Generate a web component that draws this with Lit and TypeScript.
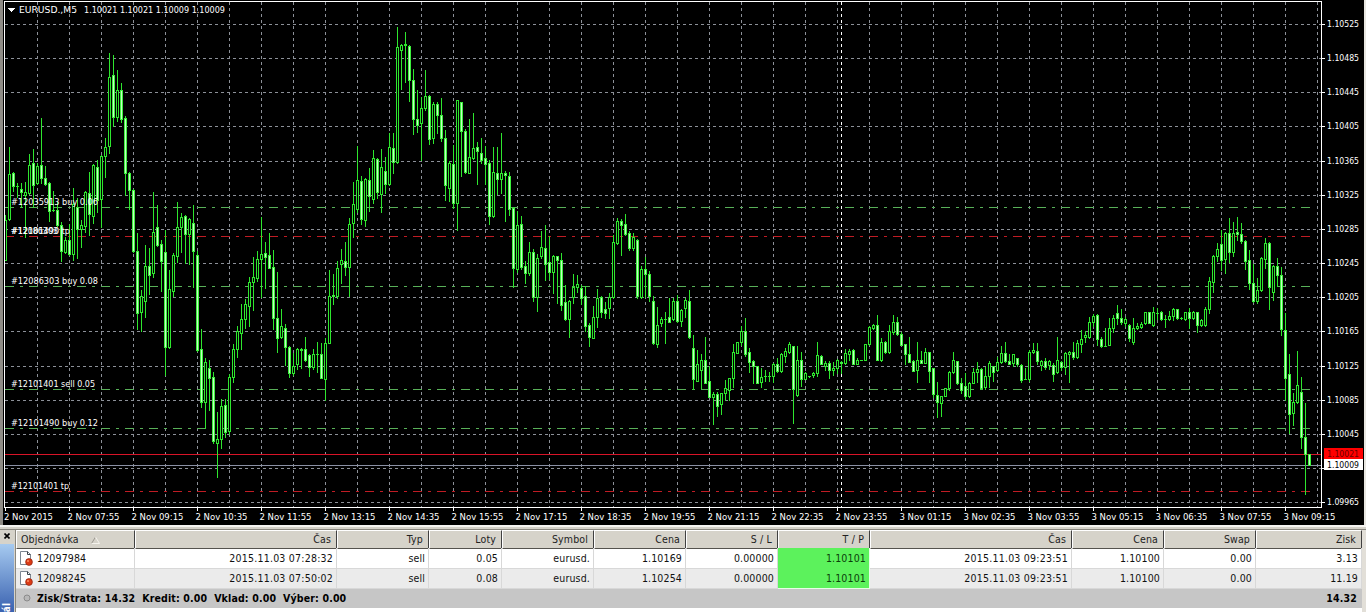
import { LitElement, html, svg, css, nothing } from "lit";
import { customElement, property } from "lit/decorators.js";
import { classMap } from "lit/directives/class-map.js";

// high, body top, body bottom, low (chart pixels), 1 = bear candle
type Candle = [number, number, number, number, number];

const CANDLES: Candle[] = [
  [215,220,260,260,0],[147,174,219,220,0],[172,173,186,191,1],[183,186,186,197,0],[183,189,192,207,1],
  [182,192,195,237,0],[154,165,193,194,0],[149,163,185,207,1],[163,166,183,184,0],[118,165,178,183,1],
  [166,178,184,185,1],[182,183,211,221,1],[191,210,210,211,0],[202,210,225,226,1],[222,225,251,261,1],
  [237,240,252,253,0],[224,240,254,255,1],[188,204,254,260,0],[198,207,229,258,1],[220,225,229,247,0],
  [191,192,226,232,0],[172,193,214,235,1],[164,165,216,223,0],[160,167,200,212,1],[155,156,199,227,0],
  [138,147,156,177,0],[53,77,146,153,0],[55,75,117,126,1],[70,90,117,121,0],[83,90,119,122,1],
  [116,118,173,195,1],[172,173,190,209,1],[189,190,251,252,1],[233,251,313,329,1],[290,296,312,331,0],
  [245,266,301,317,0],[248,266,275,294,1],[192,232,273,277,0],[205,227,245,246,1],[240,244,261,291,1],
  [230,252,347,375,1],[270,289,347,348,0],[253,255,291,296,0],[202,227,256,262,0],[213,217,227,252,0],
  [215,216,234,263,1],[218,219,234,264,0],[205,223,251,287,1],[251,255,350,351,1],[329,349,402,407,1],
  [358,362,402,428,0],[360,368,378,410,1],[372,377,441,443,1],[412,439,443,477,0],[399,406,439,448,0],
  [399,405,432,437,1],[374,377,431,434,0],[344,349,377,382,0],[326,331,349,357,0],[304,319,333,349,0],
  [299,304,319,328,0],[277,282,306,326,0],[257,277,282,310,0],[251,259,278,281,0],[217,254,259,297,0],
  [242,253,257,288,1],[233,255,268,268,1],[250,267,318,329,1],[272,318,338,352,1],[309,326,337,338,0],
  [324,328,347,365,1],[346,347,373,377,1],[353,366,373,375,0],[348,349,364,369,0],[348,349,350,368,0],
  [337,349,360,361,1],[354,355,367,376,1],[349,354,367,369,0],[342,354,354,372,0],[343,354,378,378,1],
  [338,343,379,400,0],[270,296,343,343,0],[274,295,296,304,1],[261,268,296,298,0],[249,260,264,283,0],
  [242,261,267,275,1],[218,224,267,296,0],[182,204,223,237,0],[146,180,209,212,0],[176,181,219,224,1],
  [178,179,220,226,0],[168,180,196,211,1],[150,158,199,203,0],[158,159,192,198,1],[149,167,194,212,0],
  [157,171,184,193,1],[133,147,184,185,0],[133,148,162,173,1],[27,47,162,163,0],[44,45,50,89,0],
  [32,44,45,82,0],[45,46,80,101,1],[69,80,119,134,1],[90,119,125,132,1],[97,108,123,160,0],
  [70,96,108,110,0],[95,96,139,144,1],[102,104,138,143,0],[102,104,115,133,1],[98,115,138,141,1],
  [130,138,185,200,1],[161,163,188,201,0],[145,164,203,208,1],[100,100,203,230,0],[102,102,131,176,1],
  [129,131,172,173,1],[119,157,173,173,0],[113,148,158,159,0],[142,147,151,184,1],[138,153,160,163,1],
  [146,158,164,184,1],[160,163,216,224,1],[147,172,216,217,0],[147,173,179,194,1],[133,173,179,193,0],
  [171,173,175,221,1],[172,176,209,215,1],[207,208,268,287,1],[211,225,269,272,0],[216,224,267,269,1],
  [261,266,273,283,1],[242,252,273,275,0],[249,252,297,301,1],[254,258,297,311,0],[231,247,256,258,0],
  [225,248,264,280,1],[236,262,272,279,1],[255,256,272,293,0],[256,256,260,303,1],[253,260,305,310,1],
  [285,302,319,320,1],[300,301,319,337,0],[274,287,297,303,0],[275,284,287,292,0],[285,288,298,304,1],
  [286,296,326,331,1],[323,325,337,346,1],[306,317,338,338,0],[289,298,317,327,0],[296,297,312,317,1],
  [302,309,313,318,1],[293,297,308,318,0],[235,242,297,298,0],[218,221,243,244,0],[219,221,225,255,1],
  [214,224,234,235,1],[231,233,248,250,1],[233,237,248,250,0],[239,240,296,298,1],[266,269,297,298,0],
  [257,269,274,297,1],[271,274,296,301,1],[296,301,343,344,1],[307,325,344,347,0],[317,319,323,326,0],
  [312,319,319,343,0],[298,317,322,322,1],[298,301,319,320,0],[295,301,321,322,1],[309,310,321,326,0],
  [298,300,308,317,0],[290,301,337,338,1],[335,348,379,389,1],[350,364,381,381,0],[354,360,370,388,0],
  [337,360,383,383,1],[366,381,397,397,1],[392,394,397,424,0],[392,394,406,416,1],[393,393,404,414,0],
  [380,388,393,400,0],[378,378,390,400,0],[344,352,378,387,0],[342,342,353,353,0],[326,331,342,345,0],
  [318,331,354,356,1],[348,352,362,372,1],[360,361,366,383,1],[366,366,383,383,1],[368,377,382,387,0],
  [370,376,376,381,0],[372,376,376,381,0],[363,364,376,382,0],[358,364,371,372,1],[353,354,371,372,0],
  [348,351,356,362,0],[342,344,352,353,0],[346,346,389,423,1],[346,360,395,396,0],[352,360,379,386,1],
  [372,373,379,379,0],[376,376,376,377,0],[372,373,375,377,0],[342,355,373,376,0],[355,356,364,364,1],
  [361,363,366,370,0],[361,363,370,378,1],[362,368,370,375,0],[359,360,368,373,0],[361,362,363,373,1],
  [349,353,363,364,0],[349,351,354,360,0],[349,350,364,364,1],[358,360,364,364,0],[360,360,360,360,0],
  [344,344,360,360,0],[326,327,344,345,0],[324,325,328,329,0],[315,325,360,360,1],[338,342,360,361,0],
  [341,342,352,353,1],[325,331,352,353,0],[315,322,332,334,0],[317,322,334,335,1],[332,334,345,345,1],
  [344,344,354,364,1],[337,354,362,362,1],[360,361,371,371,1],[342,360,370,382,0],[351,360,363,363,1],
  [348,352,363,363,0],[352,352,371,382,1],[368,368,394,397,1],[382,395,402,417,1],[396,396,403,416,0],
  [388,388,396,396,0],[371,372,388,390,0],[352,360,372,373,0],[361,361,383,384,1],[378,383,390,393,1],
  [373,386,396,399,1],[382,383,396,397,0],[368,372,383,383,0],[362,369,372,382,0],[368,369,388,389,1],
  [367,376,387,389,0],[361,363,376,387,0],[366,366,372,381,1],[357,362,370,371,0],[346,353,362,363,0],
  [342,353,361,362,1],[354,361,364,364,1],[354,354,363,366,0],[358,358,364,366,1],[364,365,380,382,1],
  [368,379,379,379,0],[350,352,379,381,0],[343,350,352,353,0],[343,351,361,364,1],[360,361,365,370,0],
  [358,361,367,369,1],[360,361,365,369,0],[363,365,374,381,1],[337,360,372,373,0],[361,362,367,370,1],
  [352,353,367,374,0],[351,352,354,382,0],[342,352,357,359,1],[340,343,357,358,0],[330,339,344,352,0],
  [331,335,337,342,0],[317,322,337,338,0],[314,316,322,326,0],[314,315,339,345,1],[337,339,346,347,1],
  [328,346,346,346,0],[318,328,345,345,0],[315,318,328,332,0],[305,313,318,324,1],[309,318,322,324,1],
  [317,319,323,326,0],[324,325,338,341,1],[318,328,342,344,0],[323,326,328,329,0],[322,324,327,328,0],
  [312,312,323,324,0],[312,312,323,323,1],[307,312,325,326,0],[308,313,313,319,0],[311,312,319,320,1],
  [315,319,319,327,0],[311,316,319,320,0],[308,309,316,320,0],[309,309,318,319,1],[317,318,318,319,0],
  [312,312,319,320,0],[308,312,318,328,1],[311,312,318,319,0],[312,312,325,332,1],[319,320,325,326,0],
  [307,309,325,326,0],[277,281,309,313,0],[255,256,282,292,0],[243,249,256,261,0],[230,244,260,270,1],
  [232,233,259,273,0],[218,233,252,262,1],[222,233,252,256,0],[217,232,234,240,1],[223,234,241,243,1],
  [240,241,261,269,1],[250,260,283,289,1],[264,283,301,302,1],[278,290,301,303,0],[257,258,290,291,0],
  [238,243,259,268,0],[242,243,287,309,1],[265,266,292,300,0],[258,266,275,286,1],[267,275,329,335,1],
  [313,330,378,400,1],[354,374,414,433,1],[393,402,413,425,0],[351,385,402,403,0],[377,392,437,448,1],
  [403,437,454,494,1],[454,454,465,465,1],
];

const SCALE: [string, number][] = [
  ["1.10525", 24], ["1.10485", 58], ["1.10445", 92], ["1.10405", 126], ["1.10365", 161],
  ["1.10325", 195], ["1.10285", 229], ["1.10245", 263], ["1.10205", 297], ["1.10165", 331],
  ["1.10125", 366], ["1.10085", 400], ["1.10045", 434], ["", 468], ["1.09965", 502],
];

const TIMES = [
  "2 Nov 2015", "2 Nov 07:55", "2 Nov 09:15", "2 Nov 10:35", "2 Nov 11:55", "2 Nov 13:15", "2 Nov 14:35",
  "2 Nov 15:55", "2 Nov 17:15", "2 Nov 18:35", "2 Nov 19:55", "2 Nov 21:15", "2 Nov 22:35", "2 Nov 23:55",
  "3 Nov 01:15", "3 Nov 02:35", "3 Nov 03:55", "3 Nov 05:15", "3 Nov 06:35", "3 Nov 07:55", "3 Nov 09:15",
];

interface Level {
  y: number;
  kind: "open" | "stop";
  labels: [string, number][];
}

const LEVELS: Level[] = [
  { y: 207, kind: "open", labels: [["#12035913 buy 0.06", 87]] },
  { y: 236, kind: "stop", labels: [["#12101490 tp", 59], ["#12086303", 47]] },
  { y: 286, kind: "open", labels: [["#12086303 buy 0.08", 87]] },
  { y: 389, kind: "open", labels: [["#12101401 sell 0.05", 84]] },
  { y: 428, kind: "open", labels: [["#12101490 buy 0.12", 87]] },
  { y: 491, kind: "stop", labels: [["#12101401 tp", 58]] },
];

@customElement("price-chart")
export class PriceChart extends LitElement {
  static override styles = css`
    :host {
      display: block;
      height: 525px;
    }
    svg {
      display: block;
      shape-rendering: crispEdges;
    }
    text {
      font-family: "DejaVu Sans Condensed", "DejaVu Sans", sans-serif;
      font-stretch: condensed;
      font-size: 9.5px;
      fill: #fff;
    }
    .grid {
      stroke: #8c9098;
      stroke-dasharray: 3 3;
      fill: none;
    }
    .day {
      stroke: #fff;
      stroke-dasharray: 3 3;
    }
    .axis {
      stroke: #fff;
      fill: none;
    }
    .open {
      stroke: #58b058;
      stroke-dasharray: 9 6 3 6;
    }
    .stop {
      stroke: #c01c24;
      stroke-dasharray: 9 6 3 6;
    }
    .ask {
      stroke: #d81428;
    }
    .bid {
      stroke: #8a90a4;
    }
    .wick {
      stroke: #2ee62e;
      fill: none;
    }
    .bull {
      stroke: #2ee62e;
      fill: #000;
    }
    .bear {
      stroke: #3cf03c;
      fill: #c4ffc4;
    }
    .tag-ask {
      fill: #f00;
    }
    .tag-bid {
      fill: #fff;
    }
    .dark {
      fill: #000;
    }
    .maroon {
      fill: #6a0000;
    }
  `;

  private label(text: string, x: number, y: number, width: number, cls = "") {
    return svg`<text class=${cls} x=${x} y=${y} textLength=${width} lengthAdjust="spacingAndGlyphs">${text}</text>`;
  }

  private candle([high, top, bottom, low, bear]: Candle, index: number) {
    const x = 5 + index * 4;
    const body =
      bottom - top < 1
        ? svg`<path class="wick" d="M${x - 1} ${top + 0.5}h3" />`
        : svg`<rect class=${bear ? "bear" : "bull"} x=${x - 0.5} y=${top + 0.5} width="2" height=${bottom - top} />`;
    return svg`<path class="wick" d="M${x + 0.5} ${high}V${low + 1}" />${body}`;
  }

  override render() {
    const columns = Array.from({ length: 41 }, (_, i) => 37 + i * 32);
    return html`
      <svg width="1366" height="525" viewBox="0 0 1366 525">
        <rect width="1366" height="525" fill="#000" />
        <rect width="3" height="525" fill="#8f8c86" />
        <rect x="1364" width="2" height="525" fill="#e8e6e0" />
        ${columns.map((x) => svg`<path class="grid" d="M${x + 0.5} 2V507" />`)}
        ${SCALE.map(([, y]) => svg`<path class="grid" d="M5 ${y + 0.5}H1321" />`)}
        <path class="day" d="M841.5 2V507" />
        ${LEVELS.map((l) => svg`<path class=${l.kind} d="M5 ${l.y + 0.5}H1311" />`)}
        <path class="bid" d="M5 465.5H1321" />
        <path class="ask" d="M5 454.5H1321" />
        ${CANDLES.map((c, i) => this.candle(c, i))}
        ${LEVELS.map((l) => l.labels.map(([text, w]) => this.label(text, 11, l.y - 2, w)))}
        <path class="axis" d="M4.5 507.5V1.5H1321.5V507.5Z" />
        ${SCALE.map(([text, y]) => svg`
          <path class="axis" d="M1322 ${y + 0.5}h3" />
          ${text ? this.label(text, 1327, y + 3, 32) : nothing}
        `)}
        ${TIMES.map((text, i) => svg`
          <path class="axis" d="M${5.5 + i * 64} 508v3" />
          ${this.label(text, i ? 3.5 + i * 64 : 4, 520, i ? 52 : 49)}
        `)}
        <rect class="tag-ask" x="1324" y="448" width="39" height="11" />
        ${this.label("1.10021", 1327, 457, 32, "maroon")}
        <rect class="tag-bid" x="1324" y="459" width="39" height="11" />
        ${this.label("1.10009", 1327, 468, 32, "dark")}
        <path d="M8 8h7l-3.5 4z" fill="#fff" />
        ${this.label("EURUSD.,M5", 19, 13, 58)}
        ${this.label("1.10021 1.10021 1.10009 1.10009", 84, 13, 141)}
      </svg>
    `;
  }
}

const HEADERS = ["Objednávka", "Čas", "Typ", "Loty", "Symbol", "Cena", "S / L", "T / P", "Čas", "Cena", "Swap", "Zisk"];

const ORDERS = [
  ["12097984", "2015.11.03 07:28:32", "sell", "0.05", "eurusd.", "1.10169", "0.00000", "1.10101", "2015.11.03 09:23:51", "1.10100", "0.00", "3.13"],
  ["12098245", "2015.11.03 07:50:02", "sell", "0.08", "eurusd.", "1.10254", "0.00000", "1.10101", "2015.11.03 09:23:51", "1.10100", "0.00", "11.19"],
];

@customElement("order-history")
export class OrderHistory extends LitElement {
  @property({ attribute: false }) orders: string[][] = [];

  static override styles = css`
    :host {
      display: block;
      font-family: "DejaVu Sans Condensed", "DejaVu Sans", sans-serif;
      font-stretch: condensed;
      font-size: 10.5px;
      letter-spacing: 0.15px;
      color: #111;
    }
    .row {
      display: grid;
      grid-template-columns: 119px 202px 92px 73px 92px 92px 92px 92px 202px 92px 92px 106px;
      height: 20px;
      box-sizing: border-box;
    }
    .head {
      height: 18px;
      background: #d6d3ca;
    }
    .head .cell {
      border-right: 1px solid #404040;
      border-bottom: 1px solid #55534e;
      border-top: 1px solid #fff;
      border-left: 1px solid #fff;
      line-height: 17px;
      padding-right: 5px;
      padding-top: 0;
      color: #222;
    }
    .cell {
      box-sizing: border-box;
      min-width: 0;
      white-space: nowrap;
      text-align: right;
      padding: 1px 3px 0 0;
      line-height: 19px;
      border-right: 1px solid #d8d8d8;
      border-bottom: 1px solid #d8d8d8;
    }
    .cell.first {
      display: flex;
      align-items: center;
      gap: 4px;
      padding-left: 3px;
    }
    .head .cell.first {
      padding-left: 4px;
      gap: 12px;
    }
    .date {
      letter-spacing: 0.22px;
    }
    .body {
      background: #fff;
    }
    .body.odd {
      background: #ebebeb;
    }
    .hit {
      background: #5cf25c;
      color: #0b3d0b;
      border-color: #e6ffe6;
    }
    .total {
      display: flex;
      align-items: center;
      height: 20px;
      background: #c6c6c6;
      font-weight: bold;
      padding: 0 5px 0 7px;
      box-sizing: border-box;
      gap: 6px;
      color: #000;
    }
    .sum {
      flex: 1;
      white-space: pre;
    }
  `;

  override render() {
    return html`
      <div class="row head">
        ${HEADERS.map((h, i) => html`
          <div class=${classMap({ cell: true, first: i === 0 })}>
            <span>${h}</span>
            ${i === 0
              ? html`<svg width="9" height="8"><path d="M0.5 7.5L4.5 1" stroke="#9a978f" fill="none" /><path d="M4.5 1L8.5 7.5H0.5" stroke="#f4f2ec" fill="none" /></svg>`
              : nothing}
          </div>
        `)}
      </div>
      ${this.orders.map((order, r) => html`
        <div class=${classMap({ row: true, body: true, odd: r % 2 === 1 })}>
          ${order.map((value, i) => html`
            <div class=${classMap({ cell: true, first: i === 0, hit: i === 7, date: i === 1 || i === 8 })}>
              ${i === 0
                ? html`<svg width="14" height="15" viewBox="0 0 14 15">
                    <path d="M1.5 0.5h7l3 3v10h-10z" fill="#fff" stroke="#7c8590" />
                    <path d="M8.5 0.5v3h3" fill="none" stroke="#3c444c" />
                    <circle cx="10" cy="11" r="3.4" fill="#dc3a14" stroke="#8c2410" stroke-width="0.7" />
                    <circle cx="9" cy="10" r="1" fill="#ff9468" />
                  </svg>`
                : nothing}
              <span>${value}</span>
            </div>
          `)}
        </div>
      `)}
      <div class="total">
        <svg width="8" height="8"><circle cx="4" cy="4" r="3" fill="#b8b8b8" stroke="#8a8a8a" /></svg>
        <span class="sum">Zisk/Strata: 14.32  Kredit: 0.00  Vklad: 0.00  Výber: 0.00</span>
        <span>14.32</span>
      </div>
    `;
  }
}

@customElement("app-root")
export class AppRoot extends LitElement {
  static override styles = css`
    :host {
      display: flex;
      flex-direction: column;
      width: 1366px;
      height: 612px;
      overflow: hidden;
      background: #fff;
    }
    .splitter {
      flex: none;
      height: 5px;
      box-sizing: border-box;
      background: #d6d3ca;
      border-top: 2px solid #f6f5f2;
      border-bottom: 1px solid #8a877f;
    }
    .terminal {
      display: flex;
      flex: 1;
      min-height: 0;
    }
    .side {
      width: 16px;
      box-sizing: border-box;
      display: flex;
      flex-direction: column;
      background: #d6d3ca;
      border-right: 1px solid #8a877f;
    }
    .close {
      display: flex;
      flex: none;
      height: 14px;
      padding: 3px 0 0 4px;
      box-sizing: border-box;
    }
    .close svg {
      display: block;
    }
    .caption {
      flex: 1;
      width: 14px;
      display: flex;
      align-items: flex-end;
      background: linear-gradient(#a6caf0, #3a62b0);
    }
    .caption span {
      writing-mode: vertical-rl;
      transform: rotate(180deg);
      font: bold 10px/13px "DejaVu Sans Condensed", "DejaVu Sans", sans-serif;
      color: #fff;
    }
    .edge {
      width: 4px;
      background: #e2dfd8;
    }
    order-history {
      width: 1346px;
    }
  `;

  override render() {
    return html`
      <price-chart></price-chart>
      <div class="splitter"></div>
      <div class="terminal">
        <div class="side">
          <div class="close">
            <svg width="6" height="6"><path d="M0.5 0.5l5 5M5.5 0.5l-5 5" stroke="#000" stroke-width="1.6" /></svg>
          </div>
          <div class="caption"><span>ál</span></div>
        </div>
        <order-history .orders=${ORDERS}></order-history>
        <div class="edge"></div>
      </div>
    `;
  }
}
